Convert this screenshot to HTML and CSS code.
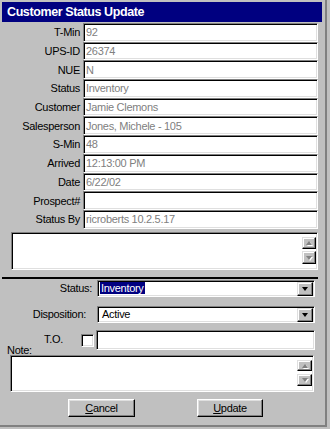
FILE: index.html
```html
<!DOCTYPE html>
<html lang="en">
<head>
    <meta charset="UTF-8">
    <meta name="viewport" content="width=device-width, initial-scale=1.0">
    <title>Customer Status Update</title>
    <link rel="stylesheet" href="styles.css">
</head>
<body>

<div class="window">
    <div class="titlebar">Customer Status Update</div>

    <!-- read-only details -->
    <div class="info">
        <label>T-Min</label><div class="field">92</div>
        <label>UPS-ID</label><div class="field">26374</div>
        <label>NUE</label><div class="field">N</div>
        <label>Status</label><div class="field">Inventory</div>
        <label>Customer</label><div class="field">Jamie Clemons</div>
        <label>Salesperson</label><div class="field">Jones, Michele - 105</div>
        <label>S-Min</label><div class="field">48</div>
        <label>Arrived</label><div class="field">12:13:00 PM</div>
        <label>Date</label><div class="field">6/22/02</div>
        <label>Prospect#</label><div class="field"></div>
        <label>Status By</label><div class="field">ricroberts 10.2.5.17</div>
    </div>

    <div class="memo memo-history">
        <div class="memo-text"></div>
        <div class="spin">
            <div class="spin-btn up"><span class="arrow-up"></span></div>
            <div class="spin-btn down"><span class="arrow-down"></span></div>
        </div>
    </div>

    <div class="divider"></div>

    <!-- editable part -->
    <div class="row row-status">
        <label>Status:</label>
        <div class="combo">
            <span class="combo-value"><span class="selected">Inventory</span></span>
            <span class="combo-btn"><span class="arrow-down dark"></span></span>
        </div>
    </div>

    <div class="row row-disposition">
        <label>Disposition:</label>
        <div class="combo">
            <span class="combo-value">Active</span>
            <span class="combo-btn"><span class="arrow-down dark"></span></span>
        </div>
    </div>

    <div class="row-to">
        <div class="to-labels">
            <span class="to-label">T.O.</span>
            <span class="note-label">Note:</span>
        </div>
        <div class="checkbox"></div>
        <div class="textbox"></div>
    </div>

    <div class="memo memo-note">
        <div class="memo-text"></div>
        <div class="spin">
            <div class="spin-btn up"><span class="arrow-up"></span></div>
            <div class="spin-btn down"><span class="arrow-down"></span></div>
        </div>
    </div>

    <div class="buttons">
        <button class="btn btn-cancel"><u>C</u>ancel</button>
        <button class="btn btn-update"><u>U</u>pdate</button>
    </div>
</div>

</body>
</html>
```

FILE: styles.css
```css
body {
    margin: 0;
    background-color: #c0c0c0;
    font-family: "Liberation Sans", Arial, sans-serif;
    font-size: 11px;
    letter-spacing: -0.3px;
    color: #000;
}
.window {
    box-sizing: border-box;
    width: 327px;
    height: 427px;
    padding: 2px 3px 0 2px;
    border-right: 2px solid #808080;
    border-bottom: 2px solid #808080;
}
.titlebar {
    height: 20px;
    line-height: 20px;
    padding-left: 5px;
    background-color: #000080;
    color: #fff;
    font-weight: bold;
    font-size: 12.5px;
    letter-spacing: -0.4px;
}

/* sunken boxes */
.field, .memo, .combo, .textbox, .checkbox {
    box-sizing: border-box;
    background-color: #fff;
    border: 1px solid;
    border-color: #808080 #fff #fff #808080;
    box-shadow: inset 1px 1px #000, inset -1px -1px #dfdfdf;
}

.info {
    display: grid;
    grid-template-columns: 78px 235px;
    grid-auto-rows: 18.7px;
    column-gap: 3px;
    margin-top: 1px;
}
.info label {
    align-self: center;
    text-align: right;
}
.field {
    display: flex;
    align-items: center;
    padding-left: 2px;
    color: #808080;
    white-space: nowrap;
    overflow: hidden;
}

.memo {
    display: flex;
    align-items: center;
}
.memo-text {
    flex: 1;
}
.memo-history {
    width: 307px;
    height: 38px;
    margin: 3px 0 0 9px;
    padding-right: 1px;
}
.memo-note {
    width: 304px;
    height: 37px;
    margin: 0 0 0 8px;
    padding-right: 1px;
}
.spin {
    display: flex;
    flex-direction: column;
    gap: 2px;
}
.spin-btn {
    box-sizing: border-box;
    display: flex;
    align-items: center;
    justify-content: center;
    width: 14px;
    height: 12px;
    background-color: #c0c0c0;
    border: 1px solid;
    border-color: #dfdfdf #000 #000 #dfdfdf;
    box-shadow: inset -1px -1px #808080, inset 1px 1px #fff;
}
.spin-btn.down {
    height: 13px;
}
.memo-note .spin {
    gap: 3px;
}
.memo-note .spin-btn {
    width: 15px;
    height: 11px;
}
.memo-note .spin-btn.down {
    height: 12px;
}
.arrow-up, .arrow-down {
    width: 0;
    height: 0;
    border-left: 3.5px solid transparent;
    border-right: 3.5px solid transparent;
    filter: drop-shadow(1px 1px 0 #fff);
}
.arrow-up {
    border-bottom: 4px solid #808080;
}
.arrow-down {
    border-top: 4px solid #808080;
}
.arrow-down.dark {
    border-top-color: #000;
    filter: none;
}

.divider {
    width: 316px;
    height: 2px;
    margin-top: 7px;
    background-color: #000;
}

.row {
    display: grid;
    grid-template-columns: 90px 218px;
    column-gap: 5px;
}
.row label {
    align-self: center;
    text-align: right;
}
.row-status {
    margin-top: 1px;
}
.row-disposition {
    margin-top: 9px;
}
.row-disposition label {
    padding-right: 6px;
}
.combo {
    display: flex;
    align-items: center;
    height: 17px;
    padding: 0 1px 0 2px;
}
.combo-value {
    flex: 1;
    line-height: 13px;
}
.selected {
    background-color: #000080;
    color: #fff;
    padding: 0 1px;
}
.row-disposition .combo-value {
    padding-left: 2px;
}
.combo-btn {
    box-sizing: border-box;
    display: flex;
    align-items: center;
    justify-content: center;
    width: 16px;
    height: 14px;
    margin-top: 2px;
    background-color: #c0c0c0;
    border: 1px solid;
    border-color: #dfdfdf #000 #000 #dfdfdf;
    box-shadow: inset -1px -1px #808080, inset 1px 1px #fff;
}

.row-to {
    display: flex;
    margin-top: 7px;
}
.to-labels {
    display: flex;
    flex-direction: column;
    width: 79px;
}
.to-label {
    align-self: flex-end;
    margin-top: 3px;
    margin-right: 18px;
    line-height: 12px;
}
.note-label {
    padding-left: 5px;
    line-height: 10px;
}
.checkbox {
    width: 13px;
    height: 13px;
    margin-top: 4px;
}
.textbox {
    width: 219px;
    height: 20px;
    margin-left: 2px;
}

.buttons {
    display: flex;
    margin-top: 7px;
    padding-left: 66px;
    gap: 62px;
}
.btn {
    box-sizing: border-box;
    width: 67px;
    height: 18px;
    padding: 0;
    background-color: #c0c0c0;
    border: 1px solid;
    border-color: #fff #000 #000 #fff;
    box-shadow: inset -1px -1px #808080, inset 1px 1px #dfdfdf;
    font-family: "Liberation Sans", Arial, sans-serif;
    font-size: 11px;
    letter-spacing: -0.3px;
    color: #000;
}
.btn-update {
    width: 66px;
}
```
